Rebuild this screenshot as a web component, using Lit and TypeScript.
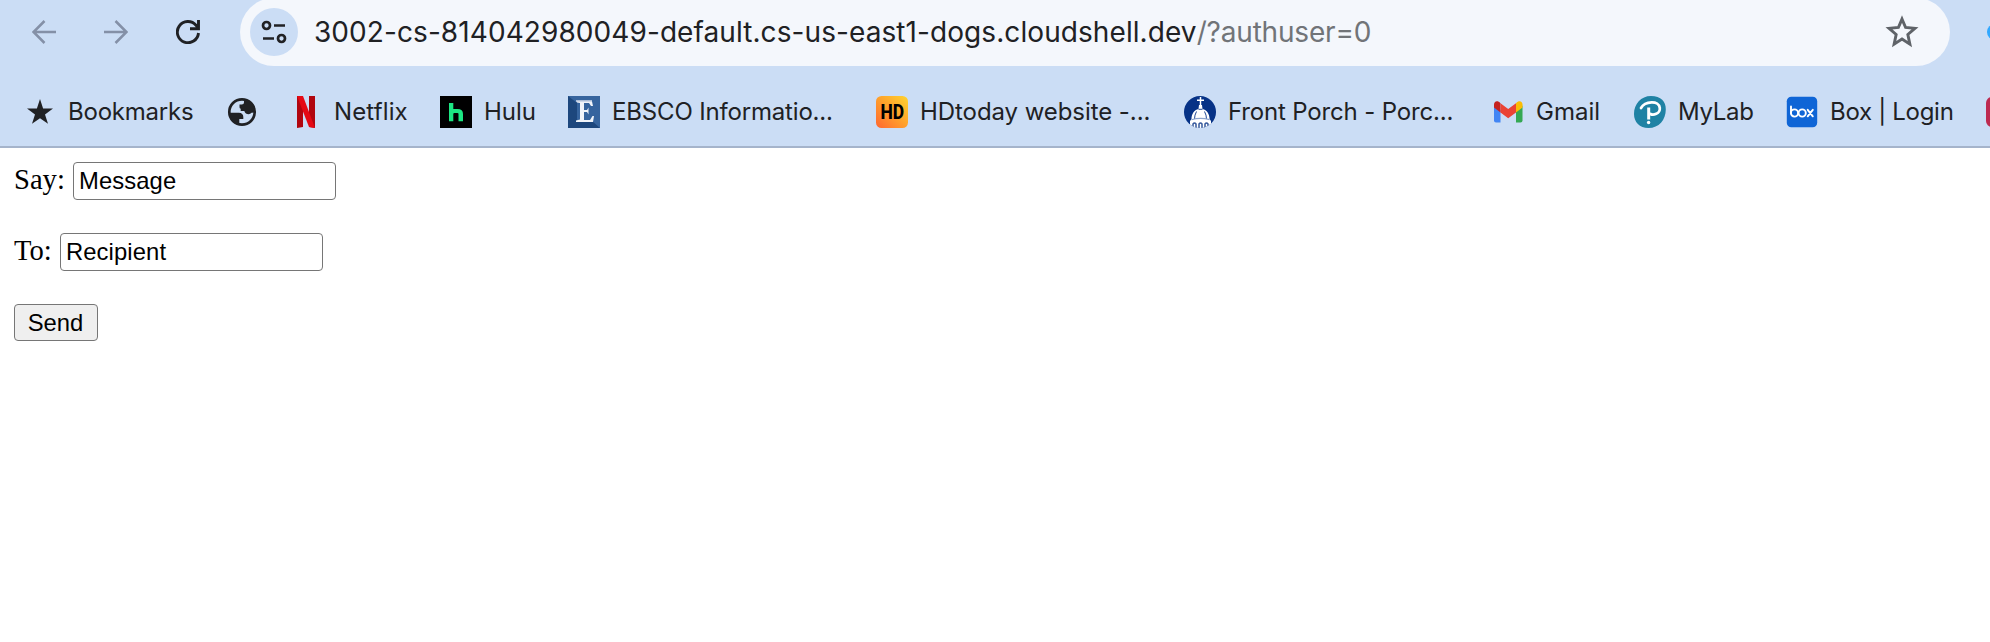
import { LitElement, html, svg, css } from "lit";
import { customElement } from "lit/decorators.js";
import { styleMap } from "lit/directives/style-map.js";

const icons: Record<string, unknown> = {
  star: svg`<path fill="#202124" d="M16 3 19.100 12.600H29L21 18.400 24 27.800 16 22.200 8 27.800 11 18.400 3 12.600H12.900Z"/>`,
  globe: svg`<circle cx="16" cy="16" r="12.700" fill="none" stroke="#202124" stroke-width="2.700"/><path fill="#202124" d="M18 3.500V6.500Q18 8.500 15.800 8.500H13.500V11.300Q13.500 12.500 14.700 12.800V15H18.300Q19.500 18.200 22.500 18.200 24.500 18.200 25.500 16.800L29 16.500 27 8ZM3 16.800H12.800Q17.300 17 17.300 21V23H13.300V28.500L7 26Z"/>`,
  netflix: svg`<path fill="#b1060f" d="M7 0H13V31L7 32ZM19 0H25V32L19 31Z"/><path fill="#e50914" d="M7 0H13L25 32 19 31Z"/>`,
  hulu: svg`<path d="M0 0H32V32H0Z"/><path fill="#1ce783" d="M9 7H13.300V13H17.500Q23 13 23 18V25.300H18.500V18Q18.500 17 17.500 17H14.300Q13.300 17 13.300 18V25.300H9Z"/>`,
  ebsco: svg`<path fill="#36649e" d="M0 0H32V32H0Z"/><path fill="#1d477d" d="M0 0 9 7V25H24L32 32H0Z"/><path fill="#aebfd8" d="M8 4H24V6H8Z"/><path fill="#f1f4f9" d="M9 5.500H24L25 10H23L21 7H16V14H19L20.500 11.500V18.500L19 16H16V24H22L24.500 20H26L25 26H8V24.500L12 23.500V7L9 6.500Z"/>`,
  hd: svg`<defs><linearGradient id="warm" x1="0" y1="1" x2="1" y2="0"><stop stop-color="#ff6630"/><stop offset=".55" stop-color="#ffa52b"/><stop offset="1" stop-color="#ffd42f"/></linearGradient></defs><rect width="32" height="32" rx="5.500" fill="url(#warm)"/><text x="4.400" y="23" textLength="23.500" lengthAdjust="spacingAndGlyphs" font-family="Roboto, sans-serif" font-weight="800" font-size="20">HD</text>`,
  porch: svg`<clipPath id="disc"><circle cx="16" cy="16" r="16"/></clipPath><g clip-path="url(#disc)"><path fill="#063286" d="M0 0H32V32H0Z"/><path fill="none" stroke="#fff" stroke-width="1.500" d="M16.500 1V12M13 4.300H20"/><path fill="#fff" d="M15 9H18L18.500 13C23 14 25.500 18 25.600 23L27 25V32H6V25L7.500 23C7.500 18 10 14 14.500 13Z"/><path fill="none" stroke="#063286" stroke-width=".9" d="M12.500 15.500Q10.500 19 10.500 23M20.500 15.500Q22.500 19 22.500 23M14.500 13.300H18.500"/><path fill="none" stroke="#8da4cd" stroke-width="1.200" d="M7.500 23.700Q16.500 21 25.600 23.700"/><path fill="none" stroke="#35589c" stroke-width="1.500" d="M9 31V28Q10.500 26 12 28V32M15 32V28Q16.500 26 18 28V32M21 32V28Q22.500 26 24 28V31"/></g>`,
  gmail: svg`<path fill="#4285f4" d="M2 9.500 8.500 14V26.500H4Q2 26.500 2 24.500Z"/><path fill="#34a853" d="M24 14 30.500 9.500V24.500Q30.500 26.500 28.500 26.500H24Z"/><path fill="#fbbc04" d="M24 7.200C27 3.600 30.500 5.200 30.500 8.500V11.500L24 16.500Z"/><path fill="#c5221f" d="M8.500 7.200C5.500 3.600 2 5.200 2 8.500V11.500L8.500 16.500Z"/><path fill="#ea4335" d="M8.500 7.200 16.200 13 24 7.200V16.500L16.200 22.300 8.500 16.500Z"/>`,
  pearson: svg`<path fill="#1f82a4" d="M17 0C27 0 32 5.500 31.800 13.500 31.700 24 25 32 14.500 32 5.500 32 0 26 0 18 0 8 7 0 17 0Z"/><path fill="none" stroke="#fff" stroke-width="2.700" stroke-linecap="round" d="M7 12C11 5 25 4 25.800 12 26.300 18 19 19.500 16.500 18"/><path fill="none" stroke="#fff" stroke-width="3" d="M14.700 11.500V23.500"/><circle cx="14.600" cy="26.500" r="1.700" fill="#fff"/>`,
  box: svg`<rect x=".8" y=".8" width="30.400" height="30.400" rx="4.500" fill="#0f65d6"/><g fill="none" stroke="#fff" stroke-width="1.900" stroke-linecap="round"><path d="M5 10.500V17"/><circle cx="8.500" cy="17" r="3.600"/><circle cx="16.200" cy="17" r="3.600"/><path d="M21.700 13.800 26.800 20.300M26.800 13.800 21.700 20.300"/></g>`,
  red: svg`<rect x="2" y="1" width="30" height="30" rx="6" fill="#bd2a50"/>`,
};

interface Bookmark { icon: string; label: string; width: number; spacing: number }

// Column width includes the icon, label and trailing space.
const bookmarks: Bookmark[] = [
  { icon: "star", label: "Bookmarks", width: 202, spacing: -0.22 },
  { icon: "globe", label: "", width: 64, spacing: 0 },
  { icon: "netflix", label: "Netflix", width: 150, spacing: 0.12 },
  { icon: "hulu", label: "Hulu", width: 128, spacing: 0 },
  { icon: "ebsco", label: "EBSCO Informatio...", width: 308, spacing: -0.17 },
  { icon: "hd", label: "HDtoday website -...", width: 308, spacing: -0.07 },
  { icon: "porch", label: "Front Porch - Porc...", width: 308, spacing: -0.16 },
  { icon: "gmail", label: "Gmail", width: 142, spacing: 0 },
  { icon: "pearson", label: "MyLab", width: 152, spacing: -0.3 },
  { icon: "box", label: "Box | Login", width: 198, spacing: -0.3 },
  { icon: "red", label: "", width: 32, spacing: 0 },
];

@customElement("address-bar")
export class AddressBar extends LitElement {
  render() {
    return html`
      <svg class="nav" viewBox="0 0 24 24"><path d="M24 12H2M12.500 1 1.500 12 12.500 23" stroke="#8490a7" stroke-width="2.500" fill="none"/></svg>
      <svg class="nav" viewBox="0 0 24 24"><path d="M0 12H22M11.500 1 22.500 12 11.500 23" stroke="#8490a7" stroke-width="2.500" fill="none"/></svg>
      <svg class="nav" viewBox="0 0 24 24"><path d="M22.500 13A10.600 10.600 0 1 1 20 5.200L22 7.500M22.500 0V8.700H14" stroke="#202124" stroke-width="2.900" fill="none"/></svg>
      <div class="pill">
        <div class="site"><svg viewBox="0 0 48 48"><g fill="none" stroke="#202124" stroke-width="2.700"><circle cx="16.500" cy="17.500" r="3.500"/><path d="M24 17.500H35M13 30.500H24"/><circle cx="31.500" cy="30.500" r="3.500"/></g></svg></div>
        <span class="url">3002-cs-814042980049-default.cs-us-east1-dogs.cloudshell.dev<span class="query">/?authuser=0</span></span>
        <svg class="save" viewBox="0 0 32 32"><path fill="none" stroke="#5f6368" stroke-width="2.600" d="M16 4.500 19.200 12 27.500 12.800 21.200 18.200 23 26.800 16 22.300 9 26.800 10.800 18.200 4.500 12.800 12.800 12Z"/></svg>
      </div>
      <span class="extension"></span>`;
  }
  static styles = css`
    :host { display: flex; height: 64px; align-items: center; padding-left: 32px; overflow: visible; }
    .nav { width: 24px; height: 24px; margin-right: 48px; flex: none; }
    .nav:nth-of-type(3) { margin-right: 40px; }
    .pill { display: flex; align-items: center; flex: none; box-sizing: border-box; width: 1710px; height: 68px; border-radius: 34px; background: #f4f7fc; padding: 0 30px 0 10px; }
    .site { width: 48px; height: 48px; border-radius: 50%; background: #cbddf5; }
    .site svg { display: block; }
    .url { flex: 1; margin-left: 16px; font: 28px/34px Inter, sans-serif; letter-spacing: 0.08px; color: #202124; white-space: nowrap; }
    .query { color: #717478; letter-spacing: -0.18px; }
    .save { width: 36px; height: 36px; }
    .extension { flex: none; width: 16px; height: 16px; margin-left: 37px; border-radius: 8px; background: #31a8ff; }
  `;
}

@customElement("bookmark-bar")
export class BookmarkBar extends LitElement {
  render() {
    return bookmarks.map((b) => html`
      <div class="item" style=${styleMap({ width: `${b.width}px`, letterSpacing: `${b.spacing}px` })}>
        <svg viewBox="0 0 32 32">${icons[b.icon]}</svg><span>${b.label}</span>
      </div>`);
  }
  static styles = css`
    :host { display: flex; align-items: center; height: 68px; padding: 0 0 0 24px; margin-top: 14px; }
    .item { display: flex; flex: none; align-items: center; gap: 12px; font: 24px/30px Inter, sans-serif; color: #202124; white-space: nowrap; }
    svg { width: 32px; height: 32px; flex: none; }
  `;
}

@customElement("app-root")
export class AppRoot extends LitElement {
  render() {
    return html`
      <header><address-bar></address-bar><bookmark-bar></bookmark-bar></header>
      <form @submit=${(e: Event) => e.preventDefault()}>
        <div class="row"><label class="say" for="say">Say:</label><input id="say" value="Message"></div>
        <div class="row"><label class="to" for="to">To:</label><input id="to" value="Recipient"></div>
        <button>Send</button>
      </form>`;
  }
  static styles = css`
    :host { display: block; width: 100%; height: 642px; overflow: hidden; background: #fff; }
    header { box-sizing: border-box; height: 148px; background: #cbddf5; border-bottom: 2px solid #a5b4cb; overflow: hidden; }
    form { display: flex; flex-direction: column; align-items: flex-start; padding: 14px; font: 28.6px/32px "Liberation Serif", serif; color: #000; }
    .row { display: flex; align-items: baseline; height: 38px; margin-bottom: 33px; }
    .say { width: 59px; }
    .to { width: 46px; }
    input { box-sizing: border-box; width: 263px; height: 38px; border: 1px solid #767676; border-radius: 4px; padding: 1px 5px; font: 23.8px "Liberation Sans", sans-serif; letter-spacing: 0.1px; background: #fff; color: #000; outline: none; }
    button { box-sizing: border-box; width: 84px; height: 37px; border: 1px solid #767676; border-radius: 4px; padding: 0 1px 0 0; font: 23.8px "Liberation Sans", sans-serif; background: #efefef; color: #000; }
  `;
}
